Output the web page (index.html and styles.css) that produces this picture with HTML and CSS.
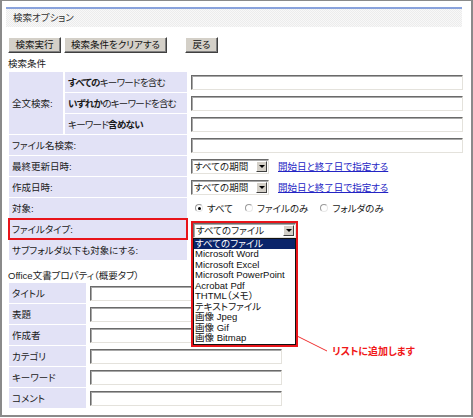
FILE: index.html
```html
<!DOCTYPE html>
<html lang="ja">
<head>
<meta charset="utf-8">
<title>検索オプション</title>
<link rel="stylesheet" href="styles.css">
</head>
<body>
<div class="frame">
  <div class="titlebar">検索オプション</div>
  <div class="buttons">
    <span class="btn b1">検索実行</span>
    <span class="btn b2">検索条件をクリアする</span>
    <span class="btn b3">戻る</span>
  </div>
  <div class="section-title">検索条件</div>
  <table class="cond">
    <colgroup><col class="c1"><col class="c2"><col class="c3"></colgroup>
    <tr>
      <td class="lbl" rowspan="3">全文検索:</td>
      <td class="lbl sub"><b>すべての</b>キーワードを含む</td>
      <td class="field"><input class="txt wide" type="text"></td>
    </tr>
    <tr>
      <td class="lbl sub"><b>いずれか</b>のキーワードを含む</td>
      <td class="field"><input class="txt wide" type="text"></td>
    </tr>
    <tr>
      <td class="lbl sub">キーワード<b>含めない</b></td>
      <td class="field"><input class="txt wide" type="text"></td>
    </tr>
    <tr>
      <td class="lbl" colspan="2">ファイル名検索:</td>
      <td class="field"><input class="txt wide" type="text"></td>
    </tr>
    <tr>
      <td class="lbl" colspan="2">最終更新日時:</td>
      <td class="field"><span class="sel period"><span class="sel-text">すべての期間</span><span class="arr"></span></span><a class="link" href="#">開始日と終了日で指定する</a></td>
    </tr>
    <tr>
      <td class="lbl" colspan="2">作成日時:</td>
      <td class="field"><span class="sel period"><span class="sel-text">すべての期間</span><span class="arr"></span></span><a class="link" href="#">開始日と終了日で指定する</a></td>
    </tr>
    <tr>
      <td class="lbl" colspan="2">対象:</td>
      <td class="field radios">
        <span class="radio checked"></span><span class="rlabel">すべて</span>
        <span class="radio"></span><span class="rlabel">ファイルのみ</span>
        <span class="radio"></span><span class="rlabel">フォルダのみ</span>
      </td>
    </tr>
    <tr>
      <td class="lbl marked" colspan="2">ファイルタイプ:</td>
      <td class="field">
        <span class="ft-wrap">
          <span class="sel ftype"><span class="sel-text">すべてのファイル</span><span class="arr"></span></span>
          <span class="dropdown">
            <span class="list">
              <span class="opt on">すべてのファイル</span>
              <span class="opt">Microsoft Word</span>
              <span class="opt">Microsoft Excel</span>
              <span class="opt">Microsoft PowerPoint</span>
              <span class="opt">Acrobat Pdf</span>
              <span class="opt">THTML（メモ）</span>
              <span class="opt">テキストファイル</span>
              <span class="opt">画像 Jpeg</span>
              <span class="opt">画像 Gif</span>
              <span class="opt">画像 Bitmap</span>
            </span>
          </span>
        </span>
      </td>
    </tr>
    <tr>
      <td class="lbl" colspan="2">サブフォルダ以下も対象にする:</td>
      <td class="field"></td>
    </tr>
  </table>

  <div class="section-title office">Office文書プロパティ（概要タブ）</div>
  <table class="props">
    <colgroup><col class="p1"><col class="p2"></colgroup>
    <tr><td class="lbl">タイトル</td><td class="field"><input class="txt short" type="text"></td></tr>
    <tr><td class="lbl">表題</td><td class="field"><input class="txt short" type="text"></td></tr>
    <tr><td class="lbl">作成者</td><td class="field"><input class="txt short" type="text"></td></tr>
    <tr><td class="lbl">カテゴリ</td><td class="field"><input class="txt short" type="text"></td></tr>
    <tr><td class="lbl">キーワード</td><td class="field"><input class="txt short" type="text"></td></tr>
    <tr><td class="lbl">コメント</td><td class="field"><input class="txt short" type="text"></td></tr>
  </table>

  <svg class="callout-line" width="44" height="24" viewBox="0 0 44 24"><line x1="1" y1="1" x2="41" y2="21" stroke="#f03030" stroke-width="1"/></svg>
  <div class="callout">リストに追加します</div>
</div>
</body>
</html>
```

FILE: styles.css
```css
* { box-sizing: border-box; }
html, body { margin: 0; padding: 0; background: #fff; }
body {
  font-family: "Liberation Sans", "Noto Sans CJK JP", sans-serif;
  font-size: 9.5px;
  color: #1a1a1a;
  font-feature-settings: "palt";
}
.frame {
  position: relative;
  width: 473px;
  height: 417px;
  border: 2px solid #8a8a8a;
  border-top-width: 1px;
  background: #fff;
}
.titlebar {
  margin: 6px 9px 0 4px;
  height: 20px;
  border-top: 2px solid #8aa3dc;
  padding-left: 7px;
  line-height: 18px;
  color: #333;
  background-color: #f2f2f2;
  background-image: repeating-conic-gradient(#ececec 0 25%, #f8f8f8 0 50%);
  background-size: 2px 2px;
}
.buttons {
  display: flex;
  margin-top: 10px;
  padding-left: 6px;
  gap: 3px;
}
.btn {
  display: block;
  height: 16px;
  line-height: 14px;
  text-align: center;
  background: #d4d0c8;
  border: 1px solid;
  border-color: #fff #404040 #404040 #fff;
  box-shadow: inset -1px -1px 0 #808080;
  color: #111;
}
.b1 { width: 53px; }
.b2 { width: 103px; }
.b3 { width: 33px; margin-left: 15px; }
.section-title {
  margin-top: 5px;
  padding-left: 6px;
  line-height: 12px;
}
table {
  border-collapse: separate;
  border-spacing: 2px 1px;
  table-layout: fixed;
  margin-left: 5px;
}
.cond { width: 460px; margin-top: 1px; }
.c1 { width: 54px; }
.c2 { width: 122px; }
.c3 { width: 276px; }
td {
  height: 20px;
  padding: 0;
  vertical-align: middle;
  white-space: nowrap;
}
td.lbl {
  background: #e2e2f6;
  padding-left: 3px;
}
td.sub { letter-spacing: -0.7px; }
td.field { padding-left: 2px; }
b { font-weight: bold; }
.txt {
  display: block;
  margin: 0;
  padding: 0;
  height: 15px;
  border: 1px solid;
  border-color: #6a6a6a #e4e2dc #e4e2dc #6a6a6a;
  box-shadow: inset 1px 1px 0 #a8a8a8;
  background: #fff;
  outline: none;
}
.wide { width: 272px; }
.short { width: 192px; }
.sel {
  display: inline-flex;
  align-items: center;
  vertical-align: middle;
  height: 15px;
  border: 1px solid;
  border-color: #6a6a6a #e4e2dc #e4e2dc #6a6a6a;
  box-shadow: inset 1px 1px 0 #a8a8a8;
  background: #fff;
}
.sel-text { flex: 1; padding-left: 2px; line-height: 13px; }
.period { width: 78px; }
.arr {
  position: relative;
  width: 11px;
  height: 11px;
  margin-right: 1px;
  background: #d4d0c8;
  border: 1px solid;
  border-color: #fff #404040 #404040 #fff;
}
.arr::after {
  content: "";
  position: absolute;
  left: 2px;
  top: 3px;
  border-left: 3px solid transparent;
  border-right: 3px solid transparent;
  border-top: 3px solid #000;
}
.link {
  color: #2424c4;
  text-decoration: underline;
  margin-left: 9px;
  vertical-align: middle;
}
.radios { font-size: 0; }
.radio {
  display: inline-block;
  vertical-align: middle;
  width: 8px;
  height: 8px;
  border-radius: 50%;
  border: 1px solid;
  border-color: #9a9a9a #e8e8e8 #e8e8e8 #9a9a9a;
  background: #fff;
  position: relative;
  margin-left: 4px;
}
.radio.checked::after {
  content: "";
  position: absolute;
  left: 1.5px;
  top: 1.5px;
  width: 3px;
  height: 3px;
  border-radius: 50%;
  background: #000;
}
.rlabel {
  font-size: 9.5px;
  vertical-align: middle;
  margin-left: 4px;
  margin-right: 9px;
}
.rlabel + .radio { margin-left: 3px; }
td.marked { outline: 2px solid #e8141a; outline-offset: -1px; }
.ft-wrap {
  position: relative;
  display: inline-block;
  vertical-align: middle;
  border: 2px solid #e8141a;
  border-bottom: 0;
}
.ftype { width: 103px; display: flex; }
.dropdown {
  position: absolute;
  z-index: 5;
  left: -2px;
  top: 100%;
  width: 107px;
  border: 2px solid #e8141a;
  border-top: 0;
  background: #fff;
}
.list {
  display: block;
  border: 1px solid #111;
}
.opt {
  display: block;
  height: 10.5px;
  line-height: 10.5px;
  padding-left: 1px;
  color: #111;
}
.opt.on { background: #0a246a; color: #fff; }
.office { margin-top: 9px; }
.props { width: 284px; margin-top: 0; }
.p1 { width: 77px; }
.p2 { width: 201px; }
.callout-line {
  position: absolute;
  left: 284px;
  top: 329px;
}
.callout {
  position: absolute;
  left: 330px;
  top: 344px;
  color: #f01818;
  font-weight: bold;
  font-size: 10px;
  line-height: 14px;
}
```
